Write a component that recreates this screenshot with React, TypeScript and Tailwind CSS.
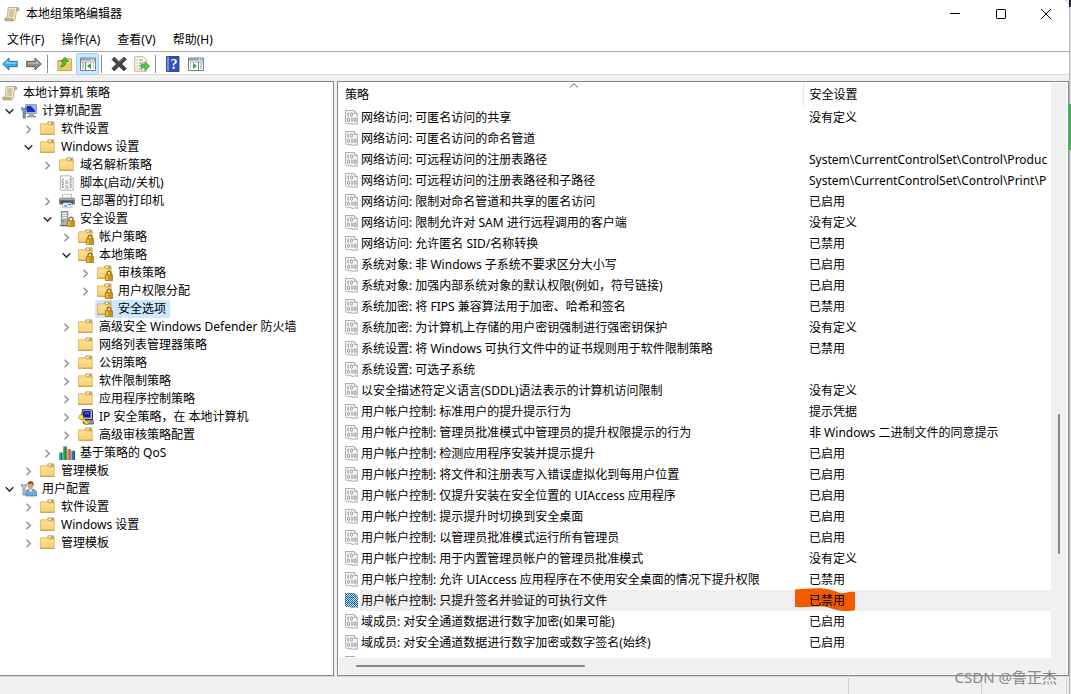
import React from "react";

type IconName = "scroll" | "computer" | "folder" | "lock" | "script" | "printer" | "server" | "ipsec" | "chart" | "user";

interface Node {
  level: number;
  icon: IconName;
  label: string;
  state?: "open" | "closed";
  selected?: boolean;
}

const tree: Node[] = [
  { level: 0, icon: "scroll", label: "本地计算机 策略" },
  { level: 1, icon: "computer", label: "计算机配置", state: "open" },
  { level: 2, icon: "folder", label: "软件设置", state: "closed" },
  { level: 2, icon: "folder", label: "Windows 设置", state: "open" },
  { level: 3, icon: "folder", label: "域名解析策略", state: "closed" },
  { level: 3, icon: "script", label: "脚本(启动/关机)" },
  { level: 3, icon: "printer", label: "已部署的打印机", state: "closed" },
  { level: 3, icon: "server", label: "安全设置", state: "open" },
  { level: 4, icon: "lock", label: "帐户策略", state: "closed" },
  { level: 4, icon: "lock", label: "本地策略", state: "open" },
  { level: 5, icon: "lock", label: "审核策略", state: "closed" },
  { level: 5, icon: "lock", label: "用户权限分配", state: "closed" },
  { level: 5, icon: "lock", label: "安全选项", selected: true },
  { level: 4, icon: "folder", label: "高级安全 Windows Defender 防火墙", state: "closed" },
  { level: 4, icon: "folder", label: "网络列表管理器策略" },
  { level: 4, icon: "folder", label: "公钥策略", state: "closed" },
  { level: 4, icon: "folder", label: "软件限制策略", state: "closed" },
  { level: 4, icon: "folder", label: "应用程序控制策略", state: "closed" },
  { level: 4, icon: "ipsec", label: "IP 安全策略，在 本地计算机", state: "closed" },
  { level: 4, icon: "folder", label: "高级审核策略配置", state: "closed" },
  { level: 3, icon: "chart", label: "基于策略的 QoS", state: "closed" },
  { level: 2, icon: "folder", label: "管理模板", state: "closed" },
  { level: 1, icon: "user", label: "用户配置", state: "open" },
  { level: 2, icon: "folder", label: "软件设置", state: "closed" },
  { level: 2, icon: "folder", label: "Windows 设置", state: "closed" },
  { level: 2, icon: "folder", label: "管理模板", state: "closed" },
];

const indents = ["w-0", "w-0", "w-[19px]", "w-[38px]", "w-[57px]", "w-[76px]"];

const policies: [string, string][] = [
  ["网络访问: 可匿名访问的共享", "没有定义"],
  ["网络访问: 可匿名访问的命名管道", ""],
  ["网络访问: 可远程访问的注册表路径", "System\\CurrentControlSet\\Control\\Produc"],
  ["网络访问: 可远程访问的注册表路径和子路径", "System\\CurrentControlSet\\Control\\Print\\P"],
  ["网络访问: 限制对命名管道和共享的匿名访问", "已启用"],
  ["网络访问: 限制允许对 SAM 进行远程调用的客户端", "没有定义"],
  ["网络访问: 允许匿名 SID/名称转换", "已禁用"],
  ["系统对象: 非 Windows 子系统不要求区分大小写", "已启用"],
  ["系统对象: 加强内部系统对象的默认权限(例如，符号链接)", "已启用"],
  ["系统加密: 将 FIPS 兼容算法用于加密、哈希和签名", "已禁用"],
  ["系统加密: 为计算机上存储的用户密钥强制进行强密钥保护", "没有定义"],
  ["系统设置: 将 Windows 可执行文件中的证书规则用于软件限制策略", "已禁用"],
  ["系统设置: 可选子系统", ""],
  ["以安全描述符定义语言(SDDL)语法表示的计算机访问限制", "没有定义"],
  ["用户帐户控制: 标准用户的提升提示行为", "提示凭据"],
  ["用户帐户控制: 管理员批准模式中管理员的提升权限提示的行为", "非 Windows 二进制文件的同意提示"],
  ["用户帐户控制: 检测应用程序安装并提示提升", "已启用"],
  ["用户帐户控制: 将文件和注册表写入错误虚拟化到每用户位置", "已启用"],
  ["用户帐户控制: 仅提升安装在安全位置的 UIAccess 应用程序", "已启用"],
  ["用户帐户控制: 提示提升时切换到安全桌面", "已启用"],
  ["用户帐户控制: 以管理员批准模式运行所有管理员", "已启用"],
  ["用户帐户控制: 用于内置管理员帐户的管理员批准模式", "没有定义"],
  ["用户帐户控制: 允许 UIAccess 应用程序在不使用安全桌面的情况下提升权限", "已禁用"],
  ["用户帐户控制: 只提升签名并验证的可执行文件", "已禁用"],
  ["域成员: 对安全通道数据进行数字加密(如果可能)", "已启用"],
  ["域成员: 对安全通道数据进行数字加密或数字签名(始终)", "已启用"],
];
const selectedPolicy = 23;

function Svg({ children, className = "size-4" }: { children: React.ReactNode; className?: string }) {
  return (
    <svg viewBox="0 0 16 16" className={className + " shrink-0"} aria-hidden="true">
      {children}
    </svg>
  );
}

function Scroll() {
  return (
    <Svg>
      <path d="M4.5 1.5h8.6c1.6 0 1.9 1.4 1.4 2.8h-2L11 13.5c-.3 1-.9 1.3-1.600 1.3H2c-1.300 0-1.500-1.500-.9-2.500h1.800L4.200 4c0-.8-.5-1.500.3-2.500z" fill="#f3ebcb" stroke="#a79f80" strokeWidth=".8" />
      <path d="M12.500 4.300c0-1.300.2-2.300.9-2.500 1.200.1 1.500 1.400 1 2.500zM1.200 12.300h7.500c-.2 1.300.2 2.200.8 2.300H2c-1.200-.1-1.300-1.500-.8-2.300z" fill="#c9bd8f" stroke="#968c68" strokeWidth=".6" />
      <path d="M5.500 4h5M5.300 6h5M5 8h5M4.700 10h5" stroke="#958b6c" strokeWidth=".8" />
    </Svg>
  );
}

function Folder() {
  return (
    <>
      <path d="M7.500 3V1.500c0-.5.300-.8.800-.8h4.900c.6 0 .9.300.9.800V4H7.500z" fill="#e8bd61" stroke="#c8943d" strokeWidth=".6" />
      <path d="M9 1.700h4v1.200H9z" fill="#fff" />
      <path d="M11 1.700h2v1.200h-2z" fill="#3aa0e8" />
      <path d="M.5 2.800h7.200l1 1.200h5.600v9.200H.5z" fill="#fbdc8c" stroke="#dba94e" strokeWidth=".7" />
      <path d="M1 8h13v5H1z" fill="#f7cf72" opacity=".55" />
      <path d="M.3 13.200h14.200" stroke="#c18c36" strokeWidth=".9" />
    </>
  );
}

function Padlock() {
  return (
    <>
      <path d="M10 10V8.600c0-3.300 4-3.300 4 0V10" fill="none" stroke="#8b6a26" strokeWidth="1.300" />
      <path d="M8.300 9.800h7.400v5.700H8.300z" fill="#dfa51d" stroke="#976c10" strokeWidth=".7" />
      <path d="M8.700 11h6.600M8.700 12.700h6.600M8.700 14.200h6.600" stroke="#ad7a0c" strokeWidth=".6" />
      <path d="M9 10.300h2v4.700H9z" fill="#f8cf57" opacity=".7" />
    </>
  );
}

function TreeIcon({ name }: { name: IconName }) {
  switch (name) {
    case "scroll":
      return <Scroll />;
    case "folder":
      return <Svg><Folder /></Svg>;
    case "lock":
      return <Svg><Folder /><Padlock /></Svg>;
    case "computer":
      return (
        <Svg>
          <path d="M4.500 1.500h11v9h-11z" fill="#dfe3e8" stroke="#858b94" strokeWidth=".8" />
          <path d="M5.700 2.700h8.600v6.600H5.700z" fill="#1733c4" />
          <path d="M9.500 2.700h4.800v5z" fill="#8bb6f5" />
          <path d="M8 10.500h4.500l1.500 3H7z" fill="#a8adb4" />
          <path d="M6 13h9v1.300H6z" fill="#858a92" />
          <path d="M.8 4v3l1.300 1v7h2.200V8l1.300-1V4L4.200 5.500h-2z" fill="#83a2bf" stroke="#3d5c7b" strokeWidth=".7" />
        </Svg>
      );
    case "script":
      return (
        <Svg>
          <path d="M1.500.8h10l2.700 2.700v11.700H1.500z" fill="#fafafa" stroke="#a5a5a5" strokeWidth=".8" />
          <path d="M11.500.8v2.700h2.700" fill="none" stroke="#a5a5a5" strokeWidth=".8" />
          <path d="M5 4.500H3.500v3.200h1.300M10.500 4.500H12v3.200h-1.300M5 9H3.500v3.500H5M10.500 9H12v3.500h-1.500M6.300 6h3M6.300 8h3M6.300 11h3M6.300 13h3" fill="none" stroke="#777" strokeWidth=".8" />
        </Svg>
      );
    case "printer":
      return (
        <Svg>
          <path d="M3.500 1.300h9V6h-9z" fill="#f4f6f8" stroke="#9a9fa4" strokeWidth=".6" />
          <path d="M1 4.800h14l.8 1.500v5.200H.2V6.300z" fill="#6a6e72" />
          <path d="M.7 5.300h14.600V7H.7z" fill="#a5aaae" />
          <path d="M2.500 8.500h11v2.500h-11z" fill="#303336" />
          <path d="M4 9.800h8.500l.9 4.900H3.200z" fill="#e7f1fa" stroke="#99aaaa" strokeWidth=".5" />
          <path d="M5 12.800h3M9 11.500h3" stroke="#2c8ed6" strokeWidth="1.200" />
        </Svg>
      );
    case "server":
      return (
        <Svg>
          <path d="M2.300.5h6.500v14H2.300z" fill="#aeb5bd" stroke="#68727c" strokeWidth=".8" />
          <path d="M3.200 1.500h4.700v1.200H3.200zM3.200 3.800h4.700V5H3.200zM3.200 6.100h4.700v1.200H3.200z" fill="#edf2f6" />
          <path d="M1 14h8v1.300H1z" fill="#5c6973" />
          <path d="M3.300 9.500h1.800v1.300H3.300z" fill="#24b443" />
          <Padlock />
        </Svg>
      );
    case "ipsec":
      return (
        <Svg>
          <path d="M4.500.6h8.300l1.700 1v8.900H3.200z" fill="#b8b8b8" stroke="#333" />
          <path d="M5.300 2h7.200v6.600H4.800z" fill="#101c9b" />
          <path d="M7 3.300h4v1.900H7z" fill="#405cf0" />
          <path d="M5 11h9.800l.7 3.900H5.600z" fill="#c9c9c9" stroke="#333" strokeWidth=".8" />
          <path d="M11 13h3" stroke="#555" />
          <path d="M1.500 6.500c1-1 3-.9 3.700.4.4.9.2 1.700-.1 2.300l5.200 4.700-.4 1.600-1.900-.2-4.600-5C2 10.600.8 9.700.6 8.500z" fill="#ffe13a" stroke="#9b7808" strokeWidth=".6" />
        </Svg>
      );
    case "chart":
      return (
        <Svg>
          <path d="M.2 7.500h3.200V15H.2z" fill="#1ba0b4" />
          <path d="M4.200 1.500h3.300V15H4.200z" fill="#27aa43" />
          <path d="M8.300 4h3.300v11H8.300z" fill="#ed7650" />
          <path d="M12.400 5.800h3.400V15h-3.400z" fill="#2475c5" />
          <path d="M2.900 7.500v7.500M7 1.500V15M15.300 5.800V15" stroke="#174453" strokeWidth=".9" />
          <path d="M11.100 4v11" stroke="#a84a32" strokeWidth=".9" />
        </Svg>
      );
    case "user":
      return (
        <Svg>
          <path d="M5 15v-3.500c0-2 1.500-3.500 4.500-3.500 3.500 0 6 1.300 6 4.500V15z" fill="#6fa8dd" stroke="#3b719f" strokeWidth=".7" />
          <path d="m8 8.300 1.600 3 1.900-2.800z" fill="#fff" />
          <path d="M6.700 3.500c0-2.300 1.300-3 2.800-3s2.900 1 2.900 3.200c0 2.500-1.200 4.700-2.800 4.700S6.700 6.200 6.700 3.500z" fill="#d8a36f" />
          <path d="M6.600 4c-.2-2.500 1-3.700 3-3.700s3.500 1.400 3 4.700c-1-1-.9-2-2.300-2.500C9 2.200 7.400 3 6.600 4z" fill="#705036" />
          <path d="M.8 3v2.500L2 6.800V14h2V6.800l1.200-1.300V3L4 4.500H2z" fill="#d7dfe5" stroke="#51616e" strokeWidth=".7" />
        </Svg>
      );
  }
}

function Chevron({ open }: { open: boolean }) {
  return (
    <svg viewBox="0 0 9 9" className="size-[9px]" aria-hidden="true">
      <path d={open ? "M.7 2.300 4.500 6.100 8.300 2.300" : "M2.500.7 6.300 4.500 2.500 8.300"} fill="none" stroke={open ? "#333" : "#929292"} strokeWidth="1.500" />
    </svg>
  );
}

function PolicyIcon({ selected = false }: { selected?: boolean }) {
  return (
    <svg viewBox="0 0 13 15" className="h-[15px] w-[13px] shrink-0" aria-hidden="true">
      <path d="M.5.5h8.800l3 3v11l-2.300-.8-2 .8-3-1-2.500.3-2-1.100z" fill="#f7f7f8" stroke="#a6a6aa" strokeWidth=".9" />
      <path d="M9.300.5v3h3" fill="#ddd" stroke="#a6a6aa" strokeWidth=".9" />
      <path d="M3 2.500v4M7 7.700v4" stroke="#85858f" />
      <ellipse cx="6.500" cy="4.500" rx="1.100" ry="1.800" fill="none" stroke="#85858f" strokeWidth=".9" />
      <ellipse cx="3.500" cy="9.700" rx="1.100" ry="1.800" fill="none" stroke="#85858f" strokeWidth=".9" />
      <ellipse cx="10" cy="9.700" rx="1.100" ry="1.800" fill="none" stroke="#85858f" strokeWidth=".9" />
      {selected && (
        <>
          <defs>
            <pattern id="dither" width="2" height="2" patternUnits="userSpaceOnUse">
              <path d="M0 0h1v1H0zM1 1h1v1H1z" fill="#0067b8" />
            </pattern>
          </defs>
          <path d="M0 0h9.500L13 3.500V15l-3-1-2 1-3-1.200-2.500.2L0 13z" fill="url(#dither)" />
        </>
      )}
    </svg>
  );
}

function ToolButton({ label, active = false, children }: { label: string; active?: boolean; children: React.ReactNode }) {
  return (
    <button
      type="button"
      aria-label={label}
      className={"flex h-[22px] w-[23px] shrink-0 items-center justify-center rounded-xs border " + (active ? "border-[#99d1ff] bg-[#cce8ff]" : "border-transparent")}
    >
      {children}
    </button>
  );
}

function PanelIcon({ back }: { back: boolean }) {
  return (
    <Svg>
      <path d="M.5 2h15v12.500H.5z" fill="#fff" stroke="#75808b" />
      <path d="M1 2.500h14v2H1z" fill="#8b98a6" />
      <path d="M11 3.500h1M13 3.500h1" stroke="#fff" />
      <path d="M1 6h14" stroke="#9ca7b1" />
      <path d={back ? "M5.500 6v8" : "M10.500 6v8"} stroke="#75808b" />
      <path d={back ? "M2 8h2M2 10h2M2 12h2M13 8h1M13 10h1M13 12h1" : "M12 8h2M12 10h2M12 12h2M2 8h1M2 10h1M2 12h1"} stroke="#8793a0" />
      <path d={back ? "M11 7v6L7 10z" : "M5 7v6l4-3z"} fill="#35a447" />
    </Svg>
  );
}

function Divider() {
  return <span className="mr-[5px] ml-0.5 h-[18px] w-px shrink-0 bg-[#8c8c8c]" />;
}

function Toolbar() {
  return (
    <div role="toolbar" aria-label="工具栏" className="flex h-6 shrink-0 items-start border-y border-t-[#a8aaad] border-b-[#dadada] bg-white pt-px">
      <div className="flex items-center">
        <button type="button" aria-label="后退" className="flex h-[22px] w-[22px] items-center justify-center pr-0.5">
          <Svg><path d="M.7 8 7 2v3.300h8.300v5.400H7V14z" fill="#38a9ed" stroke="#216fa6" strokeWidth=".9" /><path d="M2.500 7.800 6.300 4.200v2.300h8.300v1.300z" fill="#8bd8ff" /></Svg>
        </button>
        <ToolButton label="前进">
          <Svg><path d="M15.300 8 9 2v3.300H.7v5.400H9V14z" fill="#8c8c8c" stroke="#555" strokeWidth=".9" /><path d="M13.500 7.800 9.700 4.200v2.300H1.400v1.300z" fill="#bdbdbd" /></Svg>
        </ToolButton>
        <Divider />
        <ToolButton label="上移">
          <Svg><path d="M.8 4.500h4.500l1.300-1.700h8v11.800H.8z" fill="#f7d37c" stroke="#b88b3a" strokeWidth=".8" /><path d="M1 7h13.500v7H1z" fill="#eebe5f" opacity=".6" /><path d="M3 11c2.200-1.300 2.600-3.200 2.700-5.500H3.500L8 1.300l3.500 4.200H9C8.800 9 7 11.500 3 11z" fill="#48bd35" stroke="#237e1b" strokeWidth=".6" /></Svg>
        </ToolButton>
        <ToolButton label="显示/隐藏控制台树" active><PanelIcon back /></ToolButton>
        <Divider />
        <ToolButton label="删除">
          <Svg className="size-4"><path d="M1 3.500 3.500 1 8 5.500 13 1l2.300 2.300L10.700 8l4.600 4.500L13 15l-5-4.700L3.300 15 .8 12.500 5.500 8z" fill="#424242" stroke="#252525" strokeWidth=".6" /><path d="M3.500 2 8 6.500 13 2" fill="none" stroke="#858585" strokeWidth=".7" /></Svg>
        </ToolButton>
        <ToolButton label="导出列表">
          <Svg><path d="M.7.8h8.700l3 3v11.400H.7z" fill="#fffdf2" stroke="#a99d75" strokeWidth=".8" /><path d="M2.500 4h1M2.500 7h1M2.500 10h1M2.500 13h1M5 4h4M5 7h5M5 10h2M5 13h4" stroke="#807961" strokeWidth=".9" /><path d="M7 8.500h3.800V5.800l5 4.400-5 4.400v-2.900H7z" fill="#5bc53f" stroke="#35832a" strokeWidth=".6" /></Svg>
        </ToolButton>
        <Divider />
        <ToolButton label="帮助">
          <Svg><path d="M1.500.5h12.500v15H1.500z" fill="#2f4fbb" stroke="#203378" strokeWidth=".8" /><path d="M2 1h2v14H2z" fill="#7b92df" /><text x="9" y="12.500" textAnchor="middle" fill="#fff" fontFamily="Liberation Serif, serif" fontWeight="bold" fontSize="14">?</text></Svg>
        </ToolButton>
        <ToolButton label="显示/隐藏操作窗格"><PanelIcon back={false} /></ToolButton>
      </div>
    </div>
  );
}

function TitleBar() {
  return (
    <header className="flex h-[28px] shrink-0 items-center justify-between">
      <div className="flex items-center gap-1 pl-1">
        <Scroll />
        <h1 className="pl-0.5">本地组策略编辑器</h1>
      </div>
      <div className="flex">
        <button type="button" aria-label="最小化" className="flex h-7 w-[46px] items-center justify-center"><svg viewBox="0 0 10 10" className="size-[10px]"><path d="M0 4.500h10" stroke="#000" /></svg></button>
        <button type="button" aria-label="最大化" className="flex h-7 w-[45px] items-center justify-center"><svg viewBox="0 0 10 10" className="size-[10px]"><rect x=".5" y=".5" width="9" height="9" rx=".6" fill="none" stroke="#000" /></svg></button>
        <button type="button" aria-label="关闭" className="flex h-7 w-[46px] items-center justify-center"><svg viewBox="0 0 10 10" className="size-[10px]"><path d="m0 0 10 10M10 0 0 10" stroke="#000" /></svg></button>
      </div>
    </header>
  );
}

function Tree() {
  return (
    <nav aria-label="控制台树" className="w-[334px] shrink-0 border border-l-0 border-[#828790] bg-white pt-0.5">
      <ul>
        {tree.map((n, i) => (
          <li key={i} className="flex h-[18px] items-center">
            <span className={indents[n.level] + " shrink-0"} />
            {n.level > 0 &&
              (n.state ? (
                <button type="button" aria-label={n.label} aria-expanded={n.state === "open"} className="flex h-[18px] w-[19px] shrink-0 items-center justify-center">
                  <Chevron open={n.state === "open"} />
                </button>
              ) : (
                <span className="w-[19px] shrink-0" />
              ))}
            <button type="button" className={"flex h-[18px] items-center rounded-xs pr-1 pl-0.5 whitespace-nowrap " + (n.selected ? "bg-[#cce8ff]" : "")}>
              <TreeIcon name={n.icon} />
              <span className="pl-[5px]">{n.label}</span>
            </button>
          </li>
        ))}
      </ul>
    </nav>
  );
}

function PolicyList() {
  return (
    <main className="flex min-w-0 flex-1 flex-col border border-[#828790] bg-white p-px">
      <div className="flex min-h-0 flex-1">
        <div className="flex min-w-0 flex-1 flex-col overflow-hidden pl-1.5">
          <table className="w-full table-fixed border-collapse">
            <thead>
              <tr className="h-6">
                <th className="relative w-[458px] border-r border-[#e5e5e5] p-0 text-left font-normal">
                  策略
                  <svg viewBox="0 0 9 5" className="absolute top-0 left-1/2 h-[5px] w-[9px] -translate-x-1/2" aria-hidden="true"><path d="M.5 4.500 4.500.7l4 3.800" fill="none" stroke="#666" /></svg>
                </th>
                <th className="p-0 pl-1.5 text-left font-normal">安全设置</th>
              </tr>
            </thead>
            <tbody>
              {policies.map(([name, value], i) => {
                const selected = i === selectedPolicy;
                return (
                  <tr key={name} className="h-[21px]">
                    <td className="p-0">
                      <div className="flex h-[21px] items-center">
                        <span className="flex w-[15px] shrink-0"><PolicyIcon selected={selected} /></span>
                        <span className={"flex h-[21px] flex-1 items-center pl-px whitespace-nowrap " + (selected ? "bg-[#efefef]" : "")}>{name}</span>
                      </div>
                    </td>
                    <td className={"p-0 pl-1.5 whitespace-nowrap " + (selected ? "bg-[#efefef]" : "overflow-hidden")}>
                      {selected ? (
                        <span className="relative isolate">
                          {value}
                          <svg viewBox="0 0 61 24" className="absolute top-1/2 -left-3.5 -z-10 h-6 w-[61px] -translate-y-1/2" aria-hidden="true">
                            <path d="M0 1.500C10 1 20-.3 30 .8 37 1.300 44 6 50 5c4-.9 8-1.500 10-1v18c-4 1.200-12 1.500-18 0-6-1-8-3.200-14-3.500C18 18.500 8 19.500 0 19z" fill="#f25a00" />
                          </svg>
                        </span>
                      ) : (
                        value
                      )}
                    </td>
                  </tr>
                );
              })}
            </tbody>
          </table>
          <div className="flex h-[5px] items-end overflow-hidden">
            <span className="mb-px h-px w-2.5 bg-[#aaa]" />
          </div>
        </div>
        <div className="flex w-4 shrink-0 justify-center bg-[#f0f0f0] pt-[331px]">
          <span className="h-[140px] w-0.5 rounded-full bg-[#858585]" />
        </div>
      </div>
      <div className="flex h-4 shrink-0 items-center bg-[#f0f0f0] pl-[17px]">
        <span className="h-0.5 w-[229px] rounded-full bg-[#858585]" />
      </div>
    </main>
  );
}

export default function App() {
  return (
    <div className="flex min-h-screen bg-[#dfe1e4] font-['Noto_Sans','Noto_Sans_CJK_SC',sans-serif] text-[12px] leading-[18px] text-black">
      <div className="relative flex min-w-0 flex-1 flex-col overflow-hidden rounded-tr-lg bg-white">
        <TitleBar />
        <nav aria-label="菜单" className="flex h-[23px] shrink-0 items-center gap-px">
          {["文件(F)", "操作(A)", "查看(V)", "帮助(H)"].map((m) => (
            <button key={m} type="button" className="px-2 first:pl-[7px]">{m}</button>
          ))}
        </nav>
        <Toolbar />
        <div className="flex flex-1 bg-[#f0f0f0] pt-1.5">
          <Tree />
          <div className="w-[3px] shrink-0" />
          <PolicyList />
        </div>
        <footer className="flex h-[18px] shrink-0 justify-end border-t border-[#d7d7d7] bg-[#f0f0f0] pt-px pr-0.5">
          <span className="w-[133px] border-l border-[#d0d0d0]" />
          <span className="w-[86px] border-x border-[#d0d0d0]" />
        </footer>
        <p className="absolute right-3 bottom-2 text-[15px] text-[#85878a]">CSDN @鲁正杰</p>
      </div>
      <div className="flex w-0.5 shrink-0 flex-col">
        <span className="h-[7px] bg-[#17243b]" />
        <span className="h-[97px] border-l border-[#b4b6b9]" />
        <span className="h-[46px] bg-[#3fb556]" />
        <span className="flex-1 border-l border-[#b4b6b9]" />
      </div>
    </div>
  );
}
